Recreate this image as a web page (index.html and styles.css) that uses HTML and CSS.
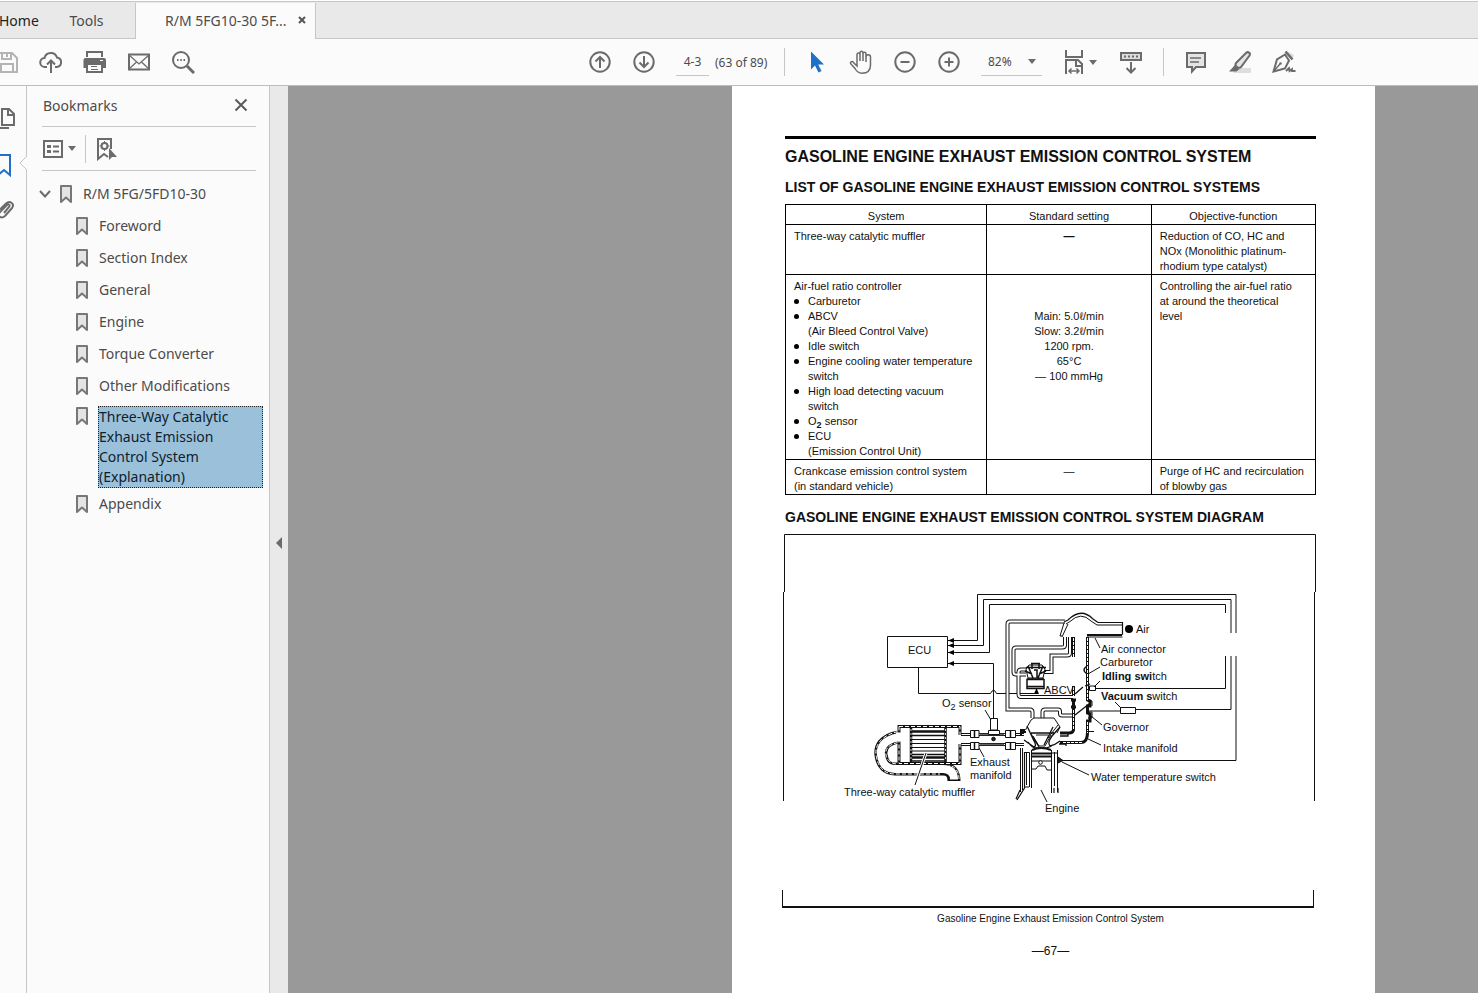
FILE: index.html
```html
<!DOCTYPE html>
<html lang="en">
<head>
<meta charset="utf-8">
<title>R/M 5FG10-30 5FD10-30</title>
<link rel="stylesheet" href="styles.css">
</head>
<body>
<svg class="defs" aria-hidden="true">
  <symbol id="bm" viewBox="0 0 14 20"><path d="M2 2h10v16l-5-4.500-5 4.500z" fill="#e4e4e4" stroke="#777" stroke-width="2" stroke-linejoin="round"/></symbol>
  <symbol id="caret" viewBox="0 0 8 5"><path d="M0 0h8L4 5z" fill="#6b6b6b"/></symbol>
</svg>
<div class="app">
  <nav class="tabs">
    <button class="tab tab-home">Home</button>
    <button class="tab tab-tools">Tools</button>
    <div class="tab-active"><span>R/M 5FG10-30 5F...</span>
      <button class="tab-close" aria-label="Close tab"><svg width="8" height="8" viewBox="0 0 8 8"><path d="M1 1l6 6M7 1L1 7" stroke="#555" stroke-width="2"/></svg></button>
    </div>
  </nav>

  <div class="toolbar">
    <div class="group group-file">
      <button class="tool" aria-label="Save"><svg class="ico pale" viewBox="0 0 24 24"><path d="M2 3h15l5 5v14H2zM7 3v6h9V3M6 22v-8h12v8M12 4v3"/></svg></button>
      <button class="tool" aria-label="Upload"><svg class="ico" viewBox="0 0 24 24"><path d="M8 17H6a4.500 4.500 0 0 1-.5-9A6.500 6.500 0 0 1 18 7.500a4.800 4.800 0 0 1 0 9.500h-2M12 23V11M8 14.500l4-4 4 4"/></svg></button>
      <button class="tool" aria-label="Print"><svg class="ico" viewBox="0 0 24 24"><path d="M4 7V2h15v5" fill="#fbfbfb"/><path d="M2.500 8h18.500a2 2 0 0 1 2 2v8H.5v-8a2 2 0 0 1 2-2z" fill="#6b6b6b" stroke="none"/><path d="M4 14h15v8H4z" fill="#fbfbfb"/><path d="M8 16.500h6M8 19.500h7" stroke-width="1"/><path d="M17 10.500h3" stroke="#fff" stroke-width="1"/></svg></button>
      <button class="tool" aria-label="Email"><svg class="ico" viewBox="0 0 24 24"><path d="M2 4.500h20v15H2z"/><path d="M2 5l10 9L22 5M2 19l7.500-7M22 19l-7.500-7" stroke-width="1.300"/></svg></button>
      <button class="tool" aria-label="Search"><svg class="ico" viewBox="0 0 24 24"><circle cx="10" cy="10" r="8"/><path d="M16 16l7 7" stroke-width="3"/><path d="M6 10h1.500M9.300 10h1.500M12.500 10H14"/></svg></button>
    </div>
    <div class="group group-main">
      <button class="tool" aria-label="Previous page"><svg class="ico" viewBox="0 0 24 24"><circle cx="12" cy="12" r="9.700"/><path d="M12 18V7M7.500 11.500L12 7l4.500 4.500"/></svg></button>
      <button class="tool" aria-label="Next page"><svg class="ico" viewBox="0 0 24 24"><circle cx="12" cy="12" r="9.700"/><path d="M12 6v11M7.500 12.500L12 17l4.500-4.500"/></svg></button>
      <div class="pages"><input class="page-input" aria-label="Page number" value="4-3"><span>(63 of 89)</span></div>
      <span class="sep"></span>
      <button class="tool" aria-label="Select"><svg class="ico" viewBox="0 0 24 24"><path d="M6 1.500v18l4-4 3.500 7 3-1.500-3.300-6.500H19z" fill="#1f70c8" stroke="none"/></svg></button>
      <button class="tool" aria-label="Pan"><svg class="ico thin" viewBox="0 0 24 24"><path d="M8 13V4.500a1.500 1.500 0 0 1 3 0V11 2.800a1.500 1.500 0 0 1 3 0V11 3.800a1.500 1.500 0 0 1 3 0V12 7a1.500 1.500 0 0 1 4.500 0v8c0 5-3 8.200-8.500 8.200-4 0-5.500-2-7-4.700L1.500 13.500c-.5-2 1.800-2.500 3-1L8 16z"/></svg></button>
      <button class="tool" aria-label="Zoom out"><svg class="ico" viewBox="0 0 24 24"><circle cx="12" cy="12" r="9.700"/><path d="M7.500 12h9"/></svg></button>
      <button class="tool" aria-label="Zoom in"><svg class="ico" viewBox="0 0 24 24"><circle cx="12" cy="12" r="9.700"/><path d="M7.500 12h9M12 7.500v9"/></svg></button>
      <div class="zoom"><select class="zoom-select" aria-label="Zoom level"><option>82%</option></select><svg class="caret" width="8" height="5"><use href="#caret"/></svg></div>
      <button class="tool tool-fit" aria-label="Page fit"><svg class="ico tall" viewBox="0 0 24 28"><path d="M4 2v7h16V2M20 26V16l-4-4H4v14M14 12v6h6"/><path d="M7 23h10M9.500 20.500L7 23l2.500 2.500M14.500 20.500L17 23l-2.500 2.500" stroke-width="1.500"/></svg><svg width="8" height="5"><use href="#caret"/></svg></button>
      <button class="tool" aria-label="Read mode"><svg class="ico" viewBox="0 0 24 24"><path d="M2 3h20v7H2z" fill="#ddd"/><path d="M5 6.500h14" stroke-dasharray="2 2"/><path d="M12 12v10M7.500 18l4.500 4.500 4.500-4.500"/></svg></button>
      <span class="sep"></span>
      <button class="tool" aria-label="Comment"><svg class="ico" viewBox="0 0 24 24"><path d="M3 3h18v14h-9l-4 4.500V17H3z" fill="#e4e4e4"/><path d="M6 8h11M6 12h9" stroke-width="1.500"/></svg></button>
      <button class="tool" aria-label="Highlight"><svg class="ico" viewBox="0 0 24 24"><path d="M8 18h15v5H5z" fill="#ddd" stroke="none"/><path d="M8 13L18 3c2-2 5 0 3.500 2.500L13 17c-2 2-7-.5-5-4z" fill="#e4e4e4"/><path d="M7 15l4.500 4-3 2.500H1z" fill="#6b6b6b" stroke="none"/></svg></button>
      <button class="tool" aria-label="Sign"><svg class="ico" viewBox="0 0 24 24"><path d="M15 1l7 4-2 5z" fill="#ddd" stroke="none"/><path d="M13.500 1.500l7 8" stroke-width="2.500"/><path d="M13 4.500L5 9.500 1.500 21.500 13 18.500l4-8z"/><path d="M2 21l6-7" stroke-width="1.500"/><circle cx="8.500" cy="13.500" r="1.300" fill="#6b6b6b" stroke="none"/><path d="M14 21l3-3 .5 3 2.500-2v2h3.500" stroke-width="1.800"/></svg></button>
    </div>
  </div>

  <main class="body">
    <aside class="rail">
      <button class="rail-btn" aria-label="Page thumbnails"><svg width="20" height="26" viewBox="0 0 20 26" fill="none" stroke="#6b6b6b" stroke-width="2"><path d="M5 3h7l5 5v11H5zM11 3v6h6M12 22H2V7"/></svg></button>
      <button class="rail-btn rail-bm" aria-label="Bookmarks"><svg width="20" height="26" viewBox="0 0 20 26" fill="none" stroke="#1f70c8" stroke-width="2"><path d="M1 3h12v20l-6-5-6 5z"/></svg></button>
      <button class="rail-btn" aria-label="Attachments"><svg width="20" height="26" viewBox="0 0 20 26" fill="none" stroke="#6b6b6b" stroke-width="2"><path d="M7 15l5-6c1.500-2-.5-3.500-2-2l-7 7c-3 4 1 7.500 5 4l7-8c3-4-2-8-6-4.500l-6 6"/></svg></button>
      <svg class="notch" width="8" height="14" viewBox="0 0 8 14"><path d="M8 0L1 7l7 7" fill="#fbfbfb" stroke="#c6c6c6"/></svg>
    </aside>

    <section class="panel">
      <header class="panel-head"><h2 class="panel-title">Bookmarks</h2><button class="plain" aria-label="Close panel"><svg width="14" height="14" viewBox="0 0 14 14"><path d="M1.500 1.500l11 11M12.500 1.500l-11 11" stroke="#5a5a5a" stroke-width="2"/></svg></button></header>
      <div class="panel-tools">
        <button class="plain options" aria-label="Options"><svg width="20" height="18" viewBox="0 0 20 18" fill="none" stroke="#6b6b6b" stroke-width="2"><path d="M1 1h18v16H1z"/><path d="M4 6.500h4M4 11.500h4" stroke-width="3"/><path d="M10 6.500h6M10 11.500h6"/></svg><svg width="8" height="5"><use href="#caret"/></svg></button>
        <span class="panel-sep"></span>
        <button class="plain" aria-label="Find current bookmark"><svg width="22" height="24" viewBox="0 0 22 24" fill="none" stroke="#6b6b6b" stroke-width="2"><path d="M16 12V2H3v20l6-5 4 3"/><circle cx="9.500" cy="9" r="3"/><path d="M9.500 4v2M9.500 12v2M4.500 9h2M12.500 9h2" stroke-width="1"/><path d="M14 11v12l3-3h5z" fill="#6b6b6b" stroke="none"/></svg></button>
      </div>
      <ul class="tree">
        <li class="node root"><svg class="twist" width="12" height="8" viewBox="0 0 12 8"><path d="M1 1l5 5.500L11 1" fill="none" stroke="#6b6b6b" stroke-width="2"/></svg><svg class="bm"><use href="#bm"/></svg><a href="#top">R/M 5FG/5FD10-30</a></li>
        <li class="node"><svg class="bm"><use href="#bm"/></svg><a href="#foreword">Foreword</a></li>
        <li class="node"><svg class="bm"><use href="#bm"/></svg><a href="#index">Section Index</a></li>
        <li class="node"><svg class="bm"><use href="#bm"/></svg><a href="#general">General</a></li>
        <li class="node"><svg class="bm"><use href="#bm"/></svg><a href="#engine">Engine</a></li>
        <li class="node"><svg class="bm"><use href="#bm"/></svg><a href="#torque">Torque Converter</a></li>
        <li class="node"><svg class="bm"><use href="#bm"/></svg><a href="#other">Other Modifications</a></li>
        <li class="node selected"><svg class="bm"><use href="#bm"/></svg><a href="#emission">Three-Way Catalytic Exhaust Emission Control System (Explanation)</a></li>
        <li class="node"><svg class="bm"><use href="#bm"/></svg><a href="#appendix">Appendix</a></li>
      </ul>
    </section>
    <button class="collapse" aria-label="Collapse panel"><svg width="6" height="12" viewBox="0 0 6 12"><path d="M6 0v12L0 6z" fill="#6b6b6b"/></svg></button>

    <div class="viewer">
      <article class="sheet">
        <h1 class="title">GASOLINE ENGINE EXHAUST EMISSION CONTROL SYSTEM</h1>
        <h2 class="subtitle">LIST OF GASOLINE ENGINE EXHAUST EMISSION CONTROL SYSTEMS</h2>
        <table class="spec">
          <thead><tr><th class="c1">System</th><th class="c2">Standard setting</th><th class="c3">Objective-function</th></tr></thead>
          <tbody>
            <tr><td>Three-way catalytic muffler</td><td class="mid"><b>—</b></td><td>Reduction of CO, HC and<br>NOx (Monolithic platinum-<br>rhodium type catalyst)</td></tr>
            <tr><td>Air-fuel ratio controller
              <ul class="parts"><li>Carburetor</li><li>ABCV<br>(Air Bleed Control Valve)</li><li>Idle switch</li><li>Engine cooling water temperature<br>switch</li><li>High load detecting vacuum<br>switch</li><li>O<sub>2</sub> sensor</li><li>ECU<br>(Emission Control Unit)</li></ul></td>
              <td class="mid values">Main: 5.0ℓ/min<br>Slow: 3.2ℓ/min<br>1200 rpm.<br>65°C<br>— 100 mmHg</td>
              <td>Controlling the air-fuel ratio<br>at around the theoretical<br>level</td></tr>
            <tr><td>Crankcase emission control system<br>(in standard vehicle)</td><td class="mid">—</td><td>Purge of HC and recirculation<br>of blowby gas</td></tr>
          </tbody>
        </table>
        <h2 class="subtitle second">GASOLINE ENGINE EXHAUST EMISSION CONTROL SYSTEM DIAGRAM</h2>
        <figure class="figure">
          <svg class="diagram" viewBox="785 534 531 374" role="img" aria-label="Emission control system diagram">
            <defs><marker id="arr" viewBox="0 0 6 6" refX="6" refY="3" markerWidth="6" markerHeight="6" markerUnits="userSpaceOnUse" orient="auto"><path d="M0 0.500L6 3 0 5.500z"/></marker></defs>
            <g class="frame"><path d="M784.500 592V534.500H1315.500V592M783.500 592V801M1314.500 592V801M782.500 890V906M1313.500 890V906"/><path d="M782 907H1314" stroke-width="2"/></g>
            <!-- control wiring -->
            <g class="ln">
              <path d="M977.500 640.500V594.500H1236V633M1236 656V760.500H1062M983.500 645.500V599.500H1231V633M1231 656V709.500H1136M989.500 652.500V604.500H1225.500V613M1225.500 656V688.500H1095M1120 711H1088"/>
              <path d="M977.500 640.500H948" marker-end="url(#arr)"/>
              <path d="M983.500 645.500H948" marker-end="url(#arr)"/>
              <path d="M989.500 652.500H948" marker-end="url(#arr)"/>
              <path d="M993.500 718V663.500H948" marker-end="url(#arr)"/>
              <path d="M887.500 636.500H947.500V667.500H887.500z"/>
              <path d="M918.500 667.500V693.500H990.500Q993.500 687 996.500 693.500H1036.500V688" marker-end="url(#arr)"/>
              <path d="M1120.500 707.500H1135.500V713.500H1120.500zM1089.500 686H1095.500V690.500H1089.500z"/>
            </g>
            <!-- vacuum hoses -->
            <g class="hose"><path d="M1065 621.500H1010Q1007.500 621.500 1007.500 624V709.500H1030Q1032.500 709.500 1032.500 712V718"/><path d="M1042.500 718V712Q1042.500 709.500 1045 709.500H1058Q1060 709.500 1060 711.500V713.500Q1060 715.500 1062 715.500H1073"/><path d="M1065 637V645Q1065 647.500 1062 647.500H1016Q1013.500 647.500 1013.500 650V672Q1013.500 674.500 1016 674.500H1026"/><path d="M1070 637V653Q1070 655.500 1067 655.500H1051.500V672H1044"/><path d="M1028 669.500H1021Q1018.500 669.500 1018.500 672V694Q1018.500 697 1021 697H1073"/></g>
            <g class="bore"><path d="M1065 621.500H1010Q1007.500 621.500 1007.500 624V709.500H1030Q1032.500 709.500 1032.500 712V718"/><path d="M1042.500 718V712Q1042.500 709.500 1045 709.500H1058Q1060 709.500 1060 711.500V713.500Q1060 715.500 1062 715.500H1073"/><path d="M1065 637V645Q1065 647.500 1062 647.500H1016Q1013.500 647.500 1013.500 650V672Q1013.500 674.500 1016 674.500H1026"/><path d="M1070 637V653Q1070 655.500 1067 655.500H1051.500V672H1044"/><path d="M1028 669.500H1021Q1018.500 669.500 1018.500 672V694Q1018.500 697 1021 697H1073"/></g>
            <!-- bleed valve -->
            <g class="ln">
              <path d="M1027 679.500H1044V688.500H1027zM1027 686.500H1044" stroke-width="1.500" fill="#fff"/>
              <path d="M1028 678L1026 669 1029 665H1042L1045 669 1043 678z" fill="#fff"/>
              <path d="M1028 666L1033 678M1043 666L1038 678M1032 663V669M1039 663V669M1031 663.500H1040M1026 667.500H1046M1025 671L1032 674M1046 671L1039 674M1034 670H1037V678M1027 679H1044" stroke-width="1.500"/>
            </g>
            <!-- air horn and throat -->
            <g class="ln">
              <path d="M1064 622L1068 620Q1081 607 1093 619L1098 622.500H1122.500V634.500" stroke-width="1.200"/>
              <path d="M1066 624L1070 621.500Q1081 611 1091 621L1097 625H1122M1087 634.500H1122.500M1087 637H1122.500M1068 624L1062 637M1064 623L1060 636H1062M1087 635.500H1122"/>
              <path d="M1087.500 637V700L1090 701V706H1087.500V713L1090 714V721H1087.500V732Q1087.500 742.500 1081 742.500H1060" stroke-width="3"/>
              <path d="M1087.500 638V700M1087.500 722V733M1082 742.500H1062" stroke="#fff" stroke-dasharray="3 1"/>
              <path d="M1073.500 637V657M1073.500 686V696M1073.500 699V730Q1073 733 1069 733H1060M1071 700H1076M1071 707H1076" stroke-width="3"/>
              <path d="M1073.500 638V657M1073.500 687V696M1073.500 710V730" stroke="#fff" stroke-dasharray="3 1"/>
              <path d="M1075 694L1083 687M1085 686L1090 684M1075 715L1089 704" stroke-width="1.300"/>
              <path d="M1087 666Q1081 670 1087 674" stroke-width="1.500"/><path d="M1086 731.500H1094M1088 701H1092V706M1088 712H1092V718H1088"/>
            </g>
            <!-- muffler -->
            <g class="hose wall"><path d="M898 737C883 740 880 748 881 755Q883 769 895 769H943Q954 769 954 781"/></g>
            <g class="bore wall"><path d="M899 737C883 740 880 748 881 755Q883 769 895 769H943Q954 769 954 779.500"/></g>
            <path class="hatch" d="M898 731.500C879 736 875 747 876 755Q879 774 895 774H940M898 742.500C887 745 885 750 886 755Q888 764 898 764H945Q959 766 959 779"/>
            <g class="ln">
              <path d="M899 726.500H960V763.500H899z" fill="#fff" stroke-width="3"/>
              <path d="M899 726.500H960V763.500H899z" stroke="#fff" stroke-dasharray="4 2"/>
              <path d="M896 737H902" stroke="#fff" stroke-width="9"/>
              <path d="M911 728V762M945.500 728V762" stroke-width="2.500"/>
              <path d="M911 729V761M945.500 729V761" stroke="#fff" stroke-width=".8" stroke-dasharray="2 2"/>
              <path d="M912 731.500H945M912 757.500H945" stroke-width="2.500"/>
              <path d="M912 735.500H945M912 754.500H945M912 761H945" stroke-width="1.500"/>
              <path d="M912 739.500H945M912 743.500H945M912 747.500H945M912 751H945"/>
              <path d="M926 753L915 785" stroke="#fff" stroke-width="3"/><path d="M926 753L915 785"/>
            </g>
            <!-- exhaust pipe -->
            <g class="ln">
              <path d="M956 739.500H968" stroke="#fff" stroke-width="9"/>
              <path d="M961 733.500H1024M961 735.500H1024M961 743.500H1024M961 745.500H1024"/>
              <path d="M980 744.500H1004M980 734.500H1004" stroke-width="1.500" stroke="#666"/>
              <g fill="#fff"><path d="M970.500 730.500H979V737.500H970.500zM970.500 742.500H979V749.500H970.500zM1005.500 730.500H1015.500V737.500H1005.500zM1005.500 742.500H1015.500V749.500H1005.500zM990.500 718.500H997.500V730H990.500zM988.500 730.500H999.500V734.500H988.500z"/></g>
              <path d="M974.500 731V737M974.500 743V749M1010.500 731V737M1010.500 743V749" stroke-width="1.500"/>
              <circle cx="993.500" cy="739" r="1.800" fill="#222"/>
            </g>
            <!-- engine -->
            <g class="ln">
              <path d="M1025.500 730L1031 720 1034 718H1054L1060 727 1057 733"/>
              <path d="M1025 730H1021V735M1021 732H1026" stroke-width="2"/>
              <path d="M1027 726L1034 741Q1037 746 1034 747L1024 740M1031 734L1039 747M1060 727L1052 736Q1047 743 1050 746Q1055 745 1060 741M1053 727L1044 745M1028 742Q1032 748 1036 748H1046L1052 746M1031 733H1054M1060 733H1068V736H1060M1059 744H1066V746" stroke-width="1.300"/>
              <path d="M1033 736L1039 746H1045L1051 735M1036 735H1048M1058 725L1048 738"/>
              <path d="M1032 750Q1041 746 1051 750" stroke-width="2"/>
              <path d="M1020.500 748V792M1022.500 748V790M1031.500 750V788M1024.500 752.500H1029.500V787M1026.500 752V785M1051.500 750V793M1054.500 752V786M1057.500 750V792M1052 753H1057"/>
              <path d="M1024.500 752V788L1017 800M1020 790L1016 799M1029 787H1025M1054 788V793M1058 788V793" stroke-width="1.200"/>
              <path d="M1032 753.500H1051M1032 756.500H1051" stroke-width="2"/>
              <path d="M1032 761H1051M1032 769H1036L1038 766H1045L1047 770H1051"/>
              <circle cx="1040.500" cy="762.500" r="1.800" fill="#fff"/>
              <path d="M1058 757L1063 760.500 1058 763z" fill="#222"/>
            </g>
            <!-- leader lines -->
            <g class="ln"><path d="M985 710L991 720M979 748L984 757M1095 638L1100 648M1088 674L1100 667M1094 687L1100 681M1115 702L1121 708M1091 716L1102 725M1088 739L1101 745M1062 762L1089 775M1041 790L1047 802"/></g>
            <circle cx="1129" cy="629" r="4"/>
            <g class="lbl">
              <text x="908" y="654">ECU</text><text x="1136" y="633">Air</text><text x="1101" y="653">Air connector</text><text x="1100" y="666">Carburetor</text>
              <text x="1102" y="680"><tspan class="b">Idling swi</tspan>tch</text><text x="1101" y="700"><tspan class="b">Vacuum s</tspan>witch</text>
              <text x="1044" y="694">ABCV</text><text x="942" y="707">O<tspan class="s" dy="3">2</tspan><tspan dy="-3"> sensor</tspan></text>
              <text x="1103" y="731">Governor</text><text x="1103" y="752">Intake manifold</text><text x="1091" y="781">Water temperature switch</text>
              <text x="970" y="766">Exhaust</text><text x="970" y="779">manifold</text><text x="844" y="796">Three-way catalytic muffler</text><text x="1045" y="812">Engine</text>
            </g>
          </svg>
          <figcaption class="caption">Gasoline Engine Exhaust Emission Control System</figcaption>
        </figure>
        <p class="folio">—67—</p>
      </article>
    </div>
  </main>
</div>
</body>
</html>
```
FILE: styles.css
```css
* { box-sizing: border-box; }
body { margin: 0; font-family: "Noto Sans", "Open Sans", sans-serif; font-size: 14px; color: #4b4b4b; }
button { border: 0; padding: 0; background: none; font: inherit; color: inherit; }
a { color: inherit; text-decoration: none; }
.defs { position: absolute; width: 0; height: 0; }
.app { display: flex; flex-direction: column; height: 100vh; overflow: hidden; background: #fbfbfb; }

.tabs { display: flex; height: 39px; padding-top: 2px; background: #e9e9e9; border-top: 1px solid #fff; box-shadow: inset 0 1px 0 #c6c6c6, inset 0 -1px 0 #c6c6c6; }
.tab { line-height: 20px; }
.tab-home { margin-left: -1px; width: 42px; text-align: left; color: #222; }
.tab-tools { width: 92px; padding-right: 1px; }
.tab-active { display: flex; align-items: center; justify-content: space-between; width: 181px; margin-left: 2px; padding: 0 9px 2px 29px; background: #fbfbfb; border: 1px solid #c6c6c6; border-width: 0 1px; }
.tab-close { display: flex; }

.toolbar { display: flex; align-items: center; height: 47px; padding-right: 172px; border-bottom: 1px solid #bdbdbd; }
.group { display: flex; align-items: center; }
.group-file { margin-left: -15px; }
.group-main { margin-left: auto; }
.tool { display: flex; align-items: center; justify-content: center; width: 44px; height: 36px; }
.tool-fit { width: 57px; gap: 3px; padding-right: 2px; }
.ico { width: 24px; height: 24px; fill: none; stroke: #6b6b6b; stroke-width: 2; }
.ico.pale { stroke: #b4b4b4; }
.ico.thin { stroke-width: 1.5; }
.ico.tall { height: 28px; }
.sep { width: 1px; height: 28px; margin: 0 10px; background: #c6c6c6; }
.pages { display: flex; align-items: center; gap: 6px; width: 108px; padding-left: 10px; font-size: 12px; white-space: nowrap; }
.page-input { width: 33px; height: 28px; border: 0; border-bottom: 1px solid #c6c6c6; padding: 0; background: none; font: inherit; color: inherit; text-align: center; }
.zoom { display: flex; align-items: center; width: 61px; height: 28px; margin: 0 10px; padding: 0 6px; border-bottom: 1px solid #c6c6c6; }
.zoom-select { flex: 1; min-width: 0; appearance: none; border: 0; padding: 0 1px; background: none; font: inherit; font-size: 12px; color: inherit; }

.body { display: flex; flex: 1; min-height: 0; }
.rail { position: relative; display: flex; flex-direction: column; align-items: flex-start; gap: 20px; width: 27px; padding-top: 20px; border-right: 1px solid #c6c6c6; }
.rail-btn { display: flex; margin-left: -3px; }
.notch { position: absolute; right: -1px; top: 70px; }
.panel { width: 243px; border-right: 1px solid #c6c6c6; padding: 0 13px 0 15px; }
.panel-head { display: flex; align-items: center; justify-content: space-between; height: 41px; padding: 0 8px 2px 1px; border-bottom: 1px solid #c6c6c6; }
.panel-title { margin: 0; font-size: 14px; font-weight: 400; }
.plain { display: flex; align-items: center; }
.panel-tools { display: flex; align-items: center; gap: 9px; height: 44px; padding-left: 1px; border-bottom: 1px solid #c6c6c6; }
.options { gap: 5px; }
.panel-sep { width: 1px; height: 28px; background: #c6c6c6; }
.tree { list-style: none; margin: 7px -7px 0 0; padding: 0; line-height: 20px; }
.node { display: flex; align-items: flex-start; gap: 10px; padding: 6px 0 6px 33px; }
.root { padding-left: 1px; }
.bm { flex: none; width: 14px; height: 20px; }
.twist { flex: none; align-self: center; margin: 0 -2px 0 -4px; }
.selected { gap: 9px; padding-top: 4px; padding-bottom: 0; }
.selected a { flex: 1; background: #9bc1da; border: 1px dotted #222; color: #10202c; }
.collapse { display: flex; align-items: center; justify-content: center; width: 18px; padding-top: 6px; background: #e9e9e9; }

.viewer { flex: 1; display: flex; justify-content: flex-end; align-items: flex-start; min-width: 0; padding-right: 103px; background: #999; overflow: hidden; }
.sheet { width: 100%; max-width: 643px; min-height: 100%; padding: 50px 59px 40px 53px; background: #fff; color: #111; font-family: "Liberation Sans", Arial, sans-serif; font-size: 11px; line-height: 15px; }
.title { margin: 0; padding-top: 8px; border-top: 3px solid #000; font-size: 16px; line-height: 20px; white-space: nowrap; }
.subtitle { margin: 12px 0 9px; font-size: 14px; line-height: 16px; white-space: nowrap; }
.second { margin-top: 14px; }
.spec { width: 100%; border-collapse: collapse; table-layout: fixed; }
.spec th, .spec td { padding: 4px 0 0 8px; border: 1px solid #000; text-align: left; vertical-align: top; font-weight: 400; white-space: nowrap; }
.spec th, .spec .mid { padding-left: 0; text-align: center; }
.spec .values { padding-top: 34px; }
.c1 { width: 38%; }
.c2 { width: 31%; }
.c3 { width: 31%; }
.parts { list-style: none; margin: 0; padding: 0; }
.parts li { position: relative; padding-left: 14px; }
.parts li::before { content: ""; position: absolute; left: 0; top: 5px; width: 5px; height: 5px; border-radius: 50%; background: #000; }
.parts sub { font-size: 9px; line-height: 1px; font-weight: 700; }
.figure { margin: 0; }
.diagram { display: block; width: 100%; height: auto; overflow: visible; }
.frame, .ln { fill: none; stroke: #111; }
.hose { fill: none; stroke: #111; stroke-width: 4; }
.bore { fill: none; stroke: #fff; stroke-width: 2; }
.hose.wall { stroke-width: 13; }
.bore.wall { stroke-width: 8; }
.hatch { fill: none; stroke: #fff; stroke-width: 1; stroke-dasharray: 4 2; }
.lbl { font-size: 11px; fill: #111; }
.lbl .b { font-weight: 700; }
.lbl .s { font-size: 9px; }
.caption { margin-top: 3px; font-size: 10px; text-align: center; }
.folio { margin: 18px 0 0; text-align: center; font-size: 12px; }
```
